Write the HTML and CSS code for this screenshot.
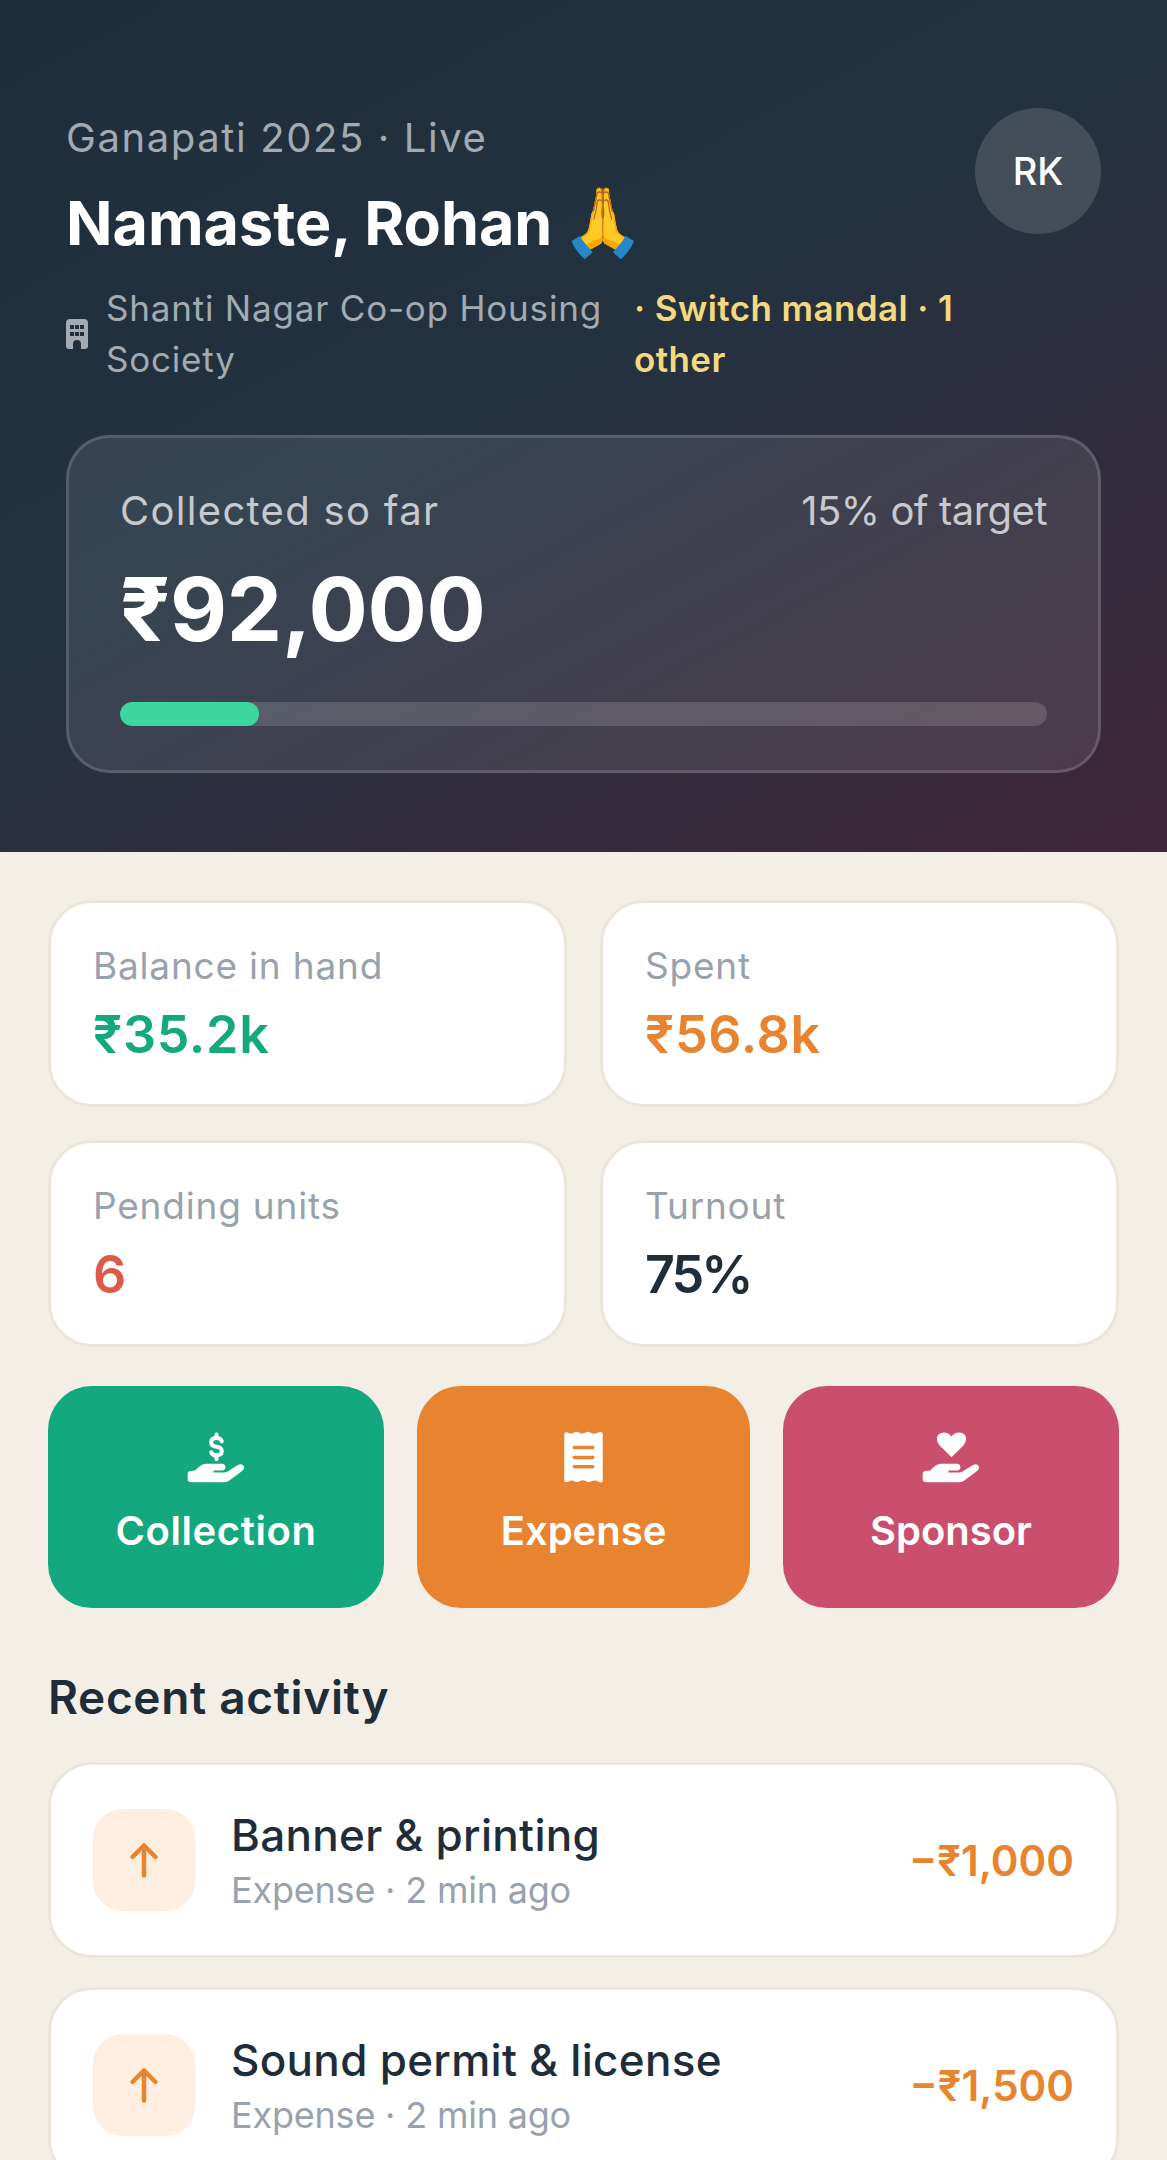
FILE: index.html
```html
<!DOCTYPE html>
<html lang="en">
<head>
<meta charset="utf-8">
<title>Mandal dashboard</title>
<link rel="stylesheet" href="styles.css">
</head>
<body>
<div class="page">
  <header class="hero">
    <div class="hero-top">
      <div class="hero-text">
        <p class="event">Ganapati 2025 · Live</p>
        <h1 class="greeting">Namaste, Rohan <span class="emoji">🙏</span></h1>
        <div class="mandal">
          <svg class="building" viewBox="0 0 22 30" aria-hidden="true"><path fill-rule="evenodd" d="M4 0H18Q22 0 22 4V27Q22 30 19 30H15V25Q15 21 11 21T7 25V30H3Q0 30 0 27V4Q0 0 4 0ZM4 6V10H8V6ZM9 6V10H13V6ZM14 6V10H18V6ZM4 13V17H8V13ZM9 13V17H13V13ZM14 13V17H18V13Z"/></svg>
          <span class="mandal-name">Shanti Nagar Co-op Housing Society</span>
          <span class="mandal-switch">· Switch mandal · 1 other</span>
        </div>
      </div>
      <div class="avatar">RK</div>
    </div>
    <section class="total">
      <div class="total-head"><span class="total-label">Collected so far</span><span class="total-pct">15% of target</span></div>
      <div class="total-amount">₹92,000</div>
      <div class="track"><div class="fill" style="width:15%"></div></div>
    </section>
  </header>

  <main class="content">
    <section class="stats">
      <div class="stat"><div class="stat-label">Balance in hand</div><div class="stat-value green">₹35.2k</div></div>
      <div class="stat"><div class="stat-label">Spent</div><div class="stat-value orange">₹56.8k</div></div>
      <div class="stat"><div class="stat-label">Pending units</div><div class="stat-value red">6</div></div>
      <div class="stat"><div class="stat-label">Turnout</div><div class="stat-value percent">75%</div></div>
    </section>

    <section class="actions">
      <button class="action action-green">
        <svg class="action-icon" viewBox="72 55 190 165" aria-hidden="true">
          <path class="hand" d="M80 190Q80 182 88 181L103 180Q118 160 135 159L183 159Q194 160 194 170Q194 179 183 180L158 180V186H190Q198 186 205 180L232 163Q244 157 250 168Q252 175 244 181L208 208Q200 215 190 215H92Q80 215 80 205Z"/>
          <path class="dollar" d="M183 92Q180 82 167 82Q151 82 151 95Q151 106 167 108Q183 110 183 122Q183 134 167 134Q155 134 151 125"/>
          <path class="dollar" d="M167 71V82M167 134V146"/>
        </svg>
        <span>Collection</span>
      </button>
      <button class="action action-orange">
        <svg class="action-icon" viewBox="35 55 190 165" aria-hidden="true">
          <path class="hand" fill-rule="evenodd" d="M72 72Q72 62 82 65Q92 72 102 65Q108 61 116 65Q126 72 136 65Q142 61 150 65Q160 72 170 67Q188 58 188 72V208Q188 220 176 214Q164 206 152 213Q146 217 138 212Q128 206 118 212Q110 217 104 213Q94 206 84 214Q72 218 72 208ZM102 105Q97 105 97 110T102 116H158Q163 116 163 110T158 105ZM102 135Q97 135 97 140T102 146H158Q163 146 163 140T158 135ZM102 163Q97 163 97 168T102 174H158Q163 174 163 168T158 163Z"/>
        </svg>
        <span>Expense</span>
      </button>
      <button class="action action-pink">
        <svg class="action-icon" viewBox="72 55 190 165" aria-hidden="true">
          <path class="hand" d="M80 190Q80 182 88 181L103 180Q118 160 135 159L183 159Q194 160 194 170Q194 179 183 180L158 180V186H190Q198 186 205 180L232 163Q244 157 250 168Q252 175 244 181L208 208Q200 215 190 215H92Q80 215 80 205Z"/>
          <path class="hand" d="M167 140L131 104Q123 95 123 86Q123 66 144 65Q158 65 167 77Q176 65 190 65Q211 66 211 86Q211 95 203 104Z"/>
        </svg>
        <span>Sponsor</span>
      </button>
    </section>

    <h2 class="section-title">Recent activity</h2>

    <section class="activity">
      <article class="row">
        <div class="row-icon"><svg viewBox="0 0 30 36" aria-hidden="true"><path d="M15 33.5V3.5M3.5 15L15 3.5L26.5 15"/></svg></div>
        <div class="row-text"><div class="row-title">Banner &amp; printing</div><div class="row-sub">Expense · 2 min ago</div></div>
        <div class="row-amount">−₹1,000</div>
      </article>
      <article class="row">
        <div class="row-icon"><svg viewBox="0 0 30 36" aria-hidden="true"><path d="M15 33.5V3.5M3.5 15L15 3.5L26.5 15"/></svg></div>
        <div class="row-text"><div class="row-title">Sound permit &amp; license</div><div class="row-sub">Expense · 2 min ago</div></div>
        <div class="row-amount">−₹1,500</div>
      </article>
    </section>
  </main>
</div>
</body>
</html>
```

FILE: styles.css
```css
* { box-sizing: border-box; }

html, body { margin: 0; height: 100%; }

body {
  background: #f3eee6;
  font-family: "Inter", "Noto Sans", sans-serif;
  color: #1f2d3a;
  overflow: hidden;
}

.page { height: 2160px; overflow: hidden; }

/* Dark banner */
.hero {
  height: 852px;
  padding: 108px 66px 0;
  background: linear-gradient(152deg, #1f2d3a 0%, #243240 45%, #3f2638 100%);
}

.hero-top { display: flex; justify-content: space-between; align-items: flex-start; }
.hero-text { width: 880px; }

.event {
  margin: 6px 0 0;
  font-size: 40px;
  line-height: 47px;
  letter-spacing: 1.6px;
  color: #a3aab1;
}

.greeting {
  margin: 24px 0 0;
  font-size: 61px;
  line-height: 76px;
  font-weight: 700;
  color: #fff;
}

.emoji {
  font-family: "Noto Color Emoji", sans-serif;
  font-size: 1.1em;
  line-height: 1;
  font-weight: 400;
  margin-left: -5px;
}

.mandal { display: flex; align-items: center; margin-top: 22px; line-height: 51px; font-size: 35px; }
.building { width: 22px; height: 30px; flex: none; margin-right: 18px; fill: #a3aab1; }
.mandal-name { width: 528px; flex: none; color: #a3aab1; letter-spacing: 0.8px; }
.mandal-switch { width: 330px; flex: none; color: #f5d97e; font-weight: 600; letter-spacing: 0.4px; }

.avatar {
  width: 126px;
  height: 126px;
  flex: none;
  border-radius: 50%;
  background: #444e59;
  color: #fff;
  font-size: 38px;
  font-weight: 500;
  display: flex;
  align-items: center;
  justify-content: center;
}

/* Collection total panel */
.total {
  margin-top: 50px;
  height: 338px;
  padding: 46px 51px 0;
  border: 3px solid rgba(255, 255, 255, 0.15);
  border-radius: 44px;
  background: rgba(255, 255, 255, 0.09);
}

.total-head { display: flex; justify-content: space-between; font-size: 40px; line-height: 54px; color: #c7c9cd; }
.total-label { letter-spacing: 1.3px; }
.total-pct { letter-spacing: -0.5px; }
.total-amount { margin-top: 19px; font-size: 88px; line-height: 104px; font-weight: 700; letter-spacing: -0.3px; color: #fff; }
.track { margin-top: 41px; height: 24px; border-radius: 12px; background: rgba(255, 255, 255, 0.15); overflow: hidden; }
.fill { height: 100%; border-radius: 12px; background: #3dd6a0; }

/* Main column */
.content { padding: 48px 48px 0; }

.stats { display: grid; grid-template-columns: 1fr 1fr; gap: 33px; }

.stat {
  height: 207px;
  padding: 38px 42px 0;
  background: #fff;
  border: 3px solid #ece6da;
  border-radius: 44px;
}

.stat-label { font-size: 37px; line-height: 50px; letter-spacing: 0.8px; color: #98a2ad; }
.stat-value { margin-top: 12px; font-size: 52px; line-height: 64px; font-weight: 600; letter-spacing: 0.7px; color: #1f2d3a; }
.stat-value.percent { letter-spacing: -3px; }
.green { color: #14a87f; }
.orange { color: #e8842f; }
.red { color: #dd5a4a; }

.actions { display: grid; grid-template-columns: 336px 333px 336px; gap: 33px; margin-top: 39px; }

.action {
  height: 222px;
  padding: 43px 0 0;
  border: 0;
  border-radius: 44px;
  color: #fff;
  font: 600 40px/48px "Inter", sans-serif;
  display: flex;
  flex-direction: column;
  align-items: center;
  gap: 23px;
}

.action-green { background: #14a87f; letter-spacing: 0.6px; }
.action-orange { background: #e8842f; }
.action-pink { background: #c94f6d; }

.action-icon { width: 63px; height: 55px; }
.hand { fill: #fff; }
.dollar { fill: none; stroke: #fff; stroke-width: 12; stroke-linecap: round; }

.section-title { margin: 59px 0 0; font-size: 46px; line-height: 60px; font-weight: 600; letter-spacing: 0.65px; color: #1f2d3a; }

.activity { display: flex; flex-direction: column; gap: 29px; margin-top: 35px; }

.row {
  height: 196px;
  flex: none;
  display: flex;
  align-items: center;
  padding: 0 42px;
  background: #fff;
  border: 3px solid #ece6da;
  border-radius: 44px;
}

.row-icon {
  width: 102px;
  height: 102px;
  flex: none;
  border-radius: 30px;
  background: #fdeee0;
  display: flex;
  align-items: center;
  justify-content: center;
}

.row-icon svg { width: 30px; height: 36px; fill: none; stroke: #e8842f; stroke-width: 4.5; stroke-linecap: round; stroke-linejoin: round; }

.row-text { flex: 1; margin-left: 36px; }
.row-title { font-size: 44px; line-height: 58px; font-weight: 500; letter-spacing: 0.3px; color: #1f2d3a; }
.row-sub { margin-top: 1px; font-size: 36px; line-height: 50px; letter-spacing: -0.2px; color: #98a2ad; }
.row-amount { font-size: 42px; font-weight: 600; color: #e8842f; }
```
